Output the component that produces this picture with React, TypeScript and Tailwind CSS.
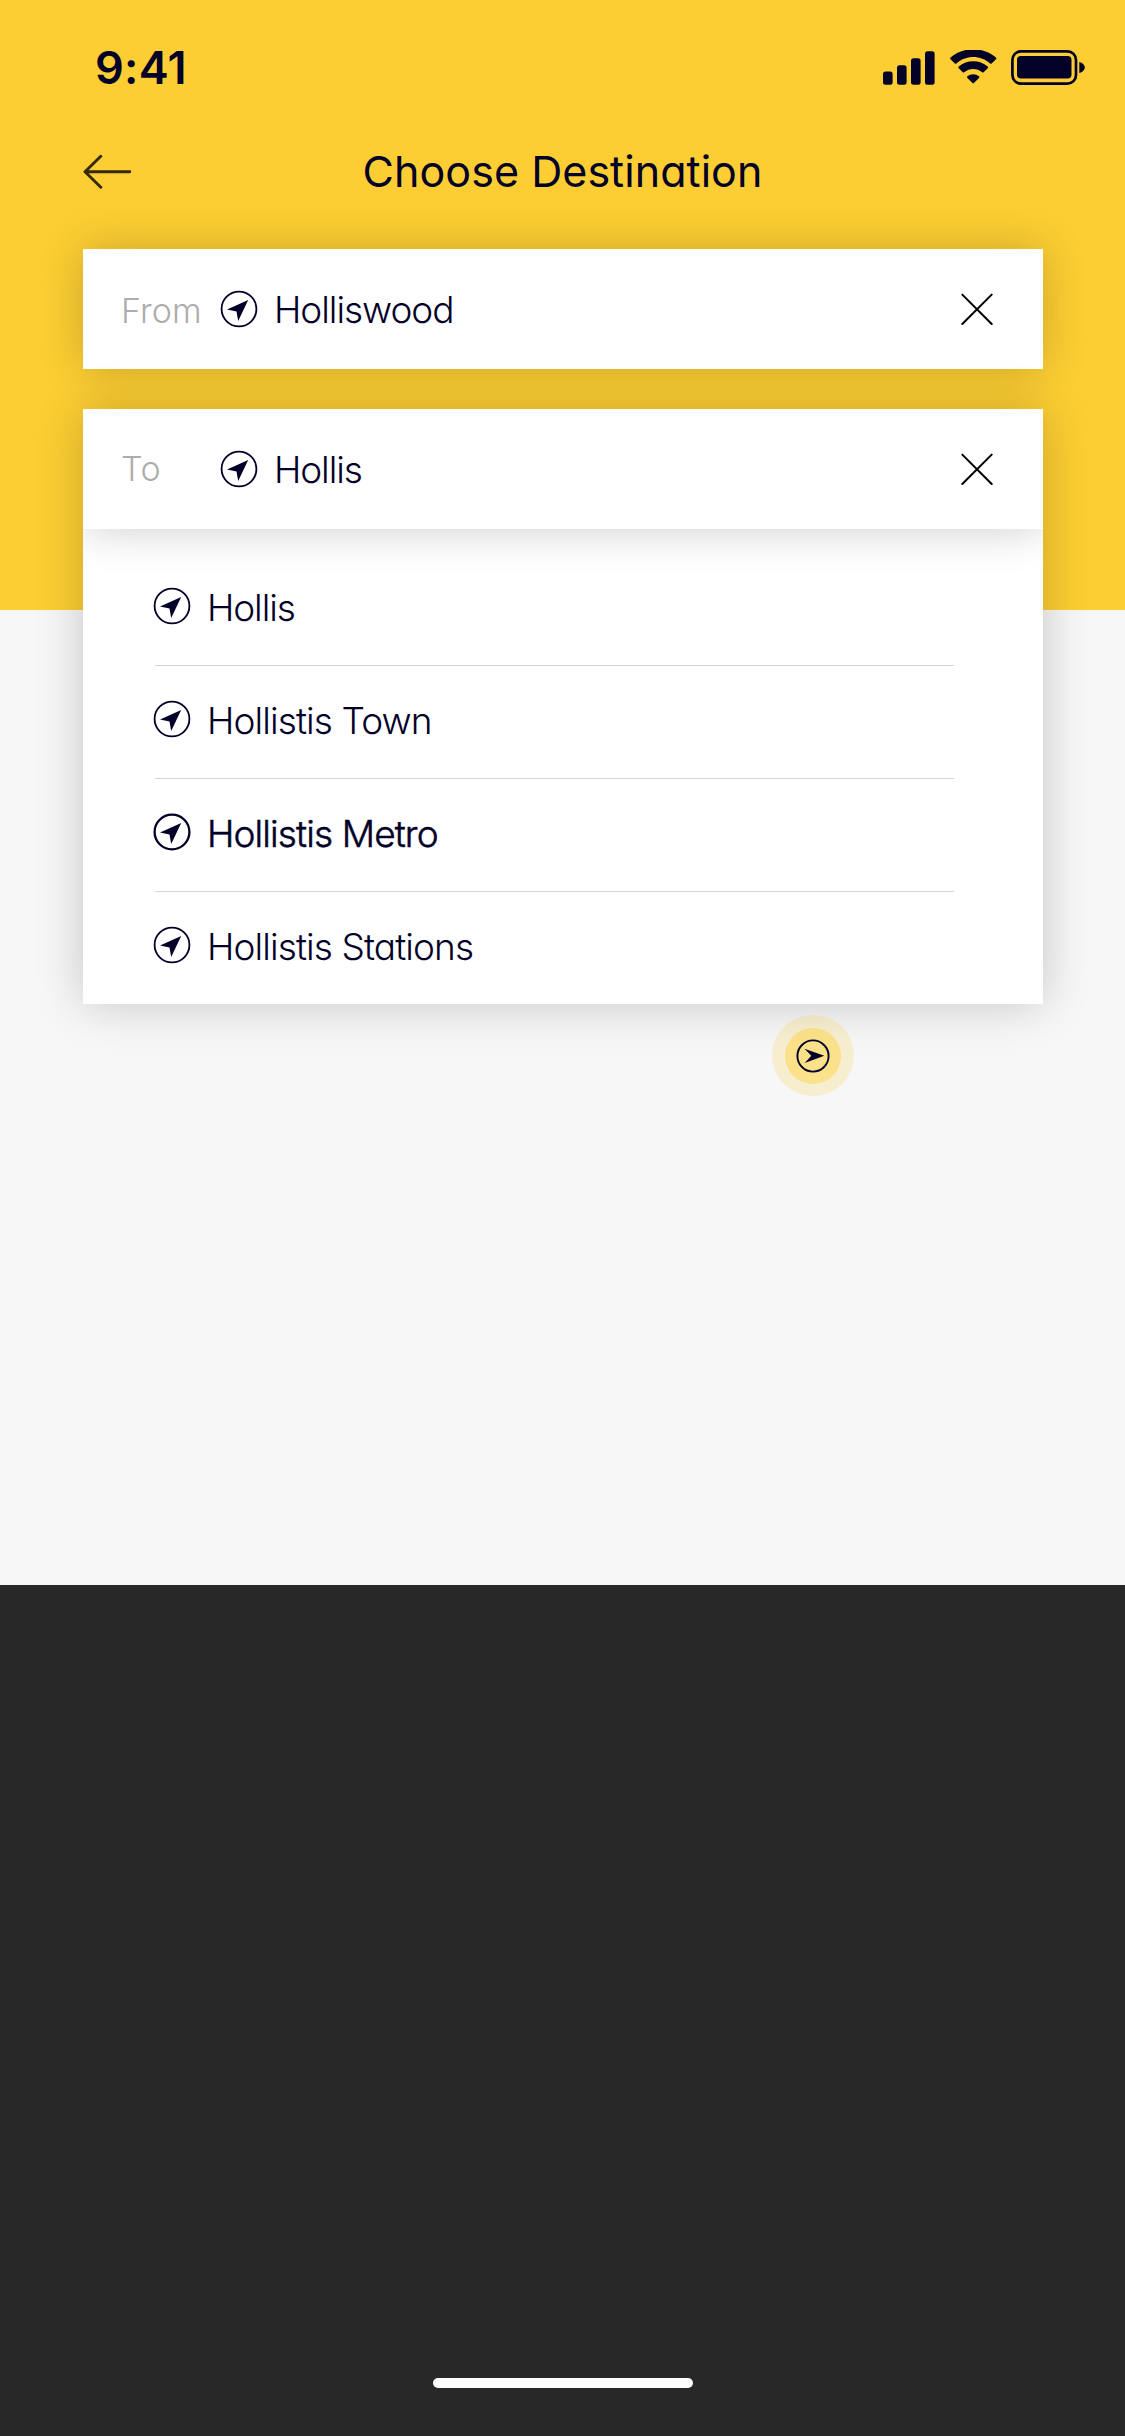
type PlaceProps = { name: string; className?: string };

function LocationIcon({ bold = false }: { bold?: boolean }) {
  return (
    <svg className="h-[38px] w-[38px] shrink-0" viewBox="-19 -19 38 38" fill="none">
      <circle r="17.4" stroke="#030128" strokeWidth={bold ? 2.3 : 1.8} />
      <path d="M9.2-9-12 .6-2.5 2.6-.8 12Z" fill="#030128" />
    </svg>
  );
}

function CloseIcon() {
  return (
    <svg className="h-8 w-8" viewBox="0 0 32 32" fill="none" stroke="#000" strokeWidth="2" strokeLinecap="round">
      <path d="M1.3 1.6 30.7 31M30.7 1.6 1.3 31" />
    </svg>
  );
}

function StatusBar() {
  return (
    <div className="flex h-[136px] items-center justify-between pr-10 pl-[95px] text-[#030128]">
      <span className="pb-0.5 text-[45px] leading-none font-semibold tracking-[0.3px]">9:41</span>
      <svg className="h-9 w-[203px]" viewBox="882 50 203 36" fill="currentColor">
        <rect x="883" y="71.5" width="9.6" height="13.3" rx="2.5" />
        <rect x="897" y="65.3" width="9.6" height="19.5" rx="2.5" />
        <rect x="911" y="58.3" width="9.6" height="26.5" rx="2.5" />
        <rect x="925" y="51.3" width="9.6" height="33.5" rx="2.5" />
        <path d="M973.2 56.9c6.4 0 12.3 2.3 16.9 6.5.5.4 1.1.4 1.5 0l4.4-4.1c.5-.5.5-1.2 0-1.7-12.5-11.2-33-11.2-45.5 0-.5.5-.5 1.2 0 1.7l4.4 4.1c.4.4 1 .4 1.5 0 4.5-4.2 10.4-6.5 16.8-6.5Z" />
        <path d="M973.2 69c3.3 0 6.5 1.2 9 3.3.4.4 1 .4 1.4 0l4.1-4c.5-.5.5-1.2 0-1.7-8.2-7.2-20.8-7.2-29 0-.5.5-.5 1.2 0 1.7l4.1 4c.4.4 1 .4 1.4 0 2.5-2.1 5.7-3.3 9-3.3Z" />
        <path d="M979 76.3c.5.5.5 1.2 0 1.7l-5.1 5.1c-.4.4-1 .4-1.4 0l-5.1-5.1c-.5-.5-.5-1.2 0-1.7 3.3-2.9 8.3-2.9 11.6 0Z" />
        <rect x="1012.4" y="51.4" width="63.6" height="32.2" rx="8.5" fill="none" stroke="currentColor" strokeWidth="2.7" />
        <rect x="1017" y="56" width="54.5" height="22.6" rx="4" />
        <path d="M1079.3 62c3.4.8 5.5 3.2 5.5 5.5s-2.1 4.7-5.5 5.5Z" />
      </svg>
    </div>
  );
}

function TitleBar() {
  return (
    <div className="relative flex h-[72px] items-center justify-center">
      <svg
        className="absolute left-[83px] h-9 w-[50px]"
        viewBox="0 0 50 36"
        fill="none"
        stroke="#33290a"
        strokeWidth="2.9"
        strokeLinecap="round"
        strokeLinejoin="round"
      >
        <path d="M46.8 17.7H2M17.8 2.2 2 17.7 17.8 33.2" />
      </svg>
      <h1 className="pb-px text-[43px] leading-none tracking-[0.05px]">Choose Destination</h1>
    </div>
  );
}

type FieldProps = { label: string; labelClass: string; value: string; valueClass: string };

function Field({ label, labelClass, value, valueClass }: FieldProps) {
  return (
    <div className="relative flex h-[120px] items-center bg-white pr-[50px] pl-[37px] shadow-[0_0_45px_rgba(0,0,0,0.2)]">
      <span className={`w-[100px] text-[34px] leading-none font-light text-[#adadad] ${labelClass}`}>{label}</span>
      <LocationIcon />
      <span className={`ml-4 flex-1 text-[37px] leading-none font-light ${valueClass}`}>{value}</span>
      <CloseIcon />
    </div>
  );
}

function Suggestion({ name, className = "" }: PlaceProps) {
  const active = name === "Hollistis Metro";
  return (
    <li className="flex h-[113px] items-center border-b border-[#d4d4d4] pb-1.5 last:border-transparent">
      <span className="-ml-0.5 flex">
        <LocationIcon bold={active} />
      </span>
      <span className={`ml-4 pt-[3px] text-[37px] leading-none font-light ${className}`}>{name}</span>
    </li>
  );
}

export default function App() {
  return (
    <div className="flex h-[2436px] w-[1125px] flex-col overflow-hidden bg-[#282828] font-['Inter','Liberation_Sans',sans-serif] text-[#030128] [font-feature-settings:'cv11']">
      <div className="h-[1585px] bg-[linear-gradient(#fcce33_610px,#f7f7f7_610px)]">
        <StatusBar />
        <TitleBar />
        <main className="mt-[41px] flex flex-col pr-[82px] pl-[83px]">
          <Field label="From" labelClass="pt-1 pl-px tracking-[0.1px]" value="Holliswood" valueClass="tracking-[-1.05px]" />
          <section className="relative mt-10">
            <div className="shadow-[0_0_45px_rgba(0,0,0,0.2)]">
              <div className="overflow-hidden bg-white">
                <Field label="To" labelClass="pl-px tracking-[0.6px]" value="Hollis" valueClass="tracking-[-1.1px]" />
                <ul className="h-[475px] pt-6 pr-[89px] pl-[72px]">
                  <Suggestion name="Hollis" className="tracking-[-1.1px]" />
                  <Suggestion name="Hollistis Town" className="tracking-[-0.9px]" />
                  <Suggestion name="Hollistis Metro" className="tracking-[-0.88px] [-webkit-text-stroke:0.5px_#030128]" />
                  <Suggestion name="Hollistis Stations" className="tracking-[-0.9px]" />
                </ul>
              </div>
            </div>
            <div className="absolute top-[606px] left-[689px] flex h-[81px] w-[82px] items-center justify-center rounded-full bg-[#fcce33]/20">
              <div className="flex h-14 w-14 items-center justify-center rounded-full bg-[#ffd034]/45">
                <svg className="h-[34px] w-[34px]" viewBox="-17 -17 34 34" fill="none">
                  <circle r="15.6" stroke="#030128" strokeWidth="1.9" />
                  <path d="M11.3-.2-8.5-7.2-1.7-.2-8.3 7Z" fill="#030128" />
                </svg>
              </div>
            </div>
          </section>
        </main>
      </div>
      <footer className="flex flex-1 items-end justify-center pb-12">
        <div className="ml-px h-2.5 w-[260px] rounded-full bg-white" />
      </footer>
    </div>
  );
}
